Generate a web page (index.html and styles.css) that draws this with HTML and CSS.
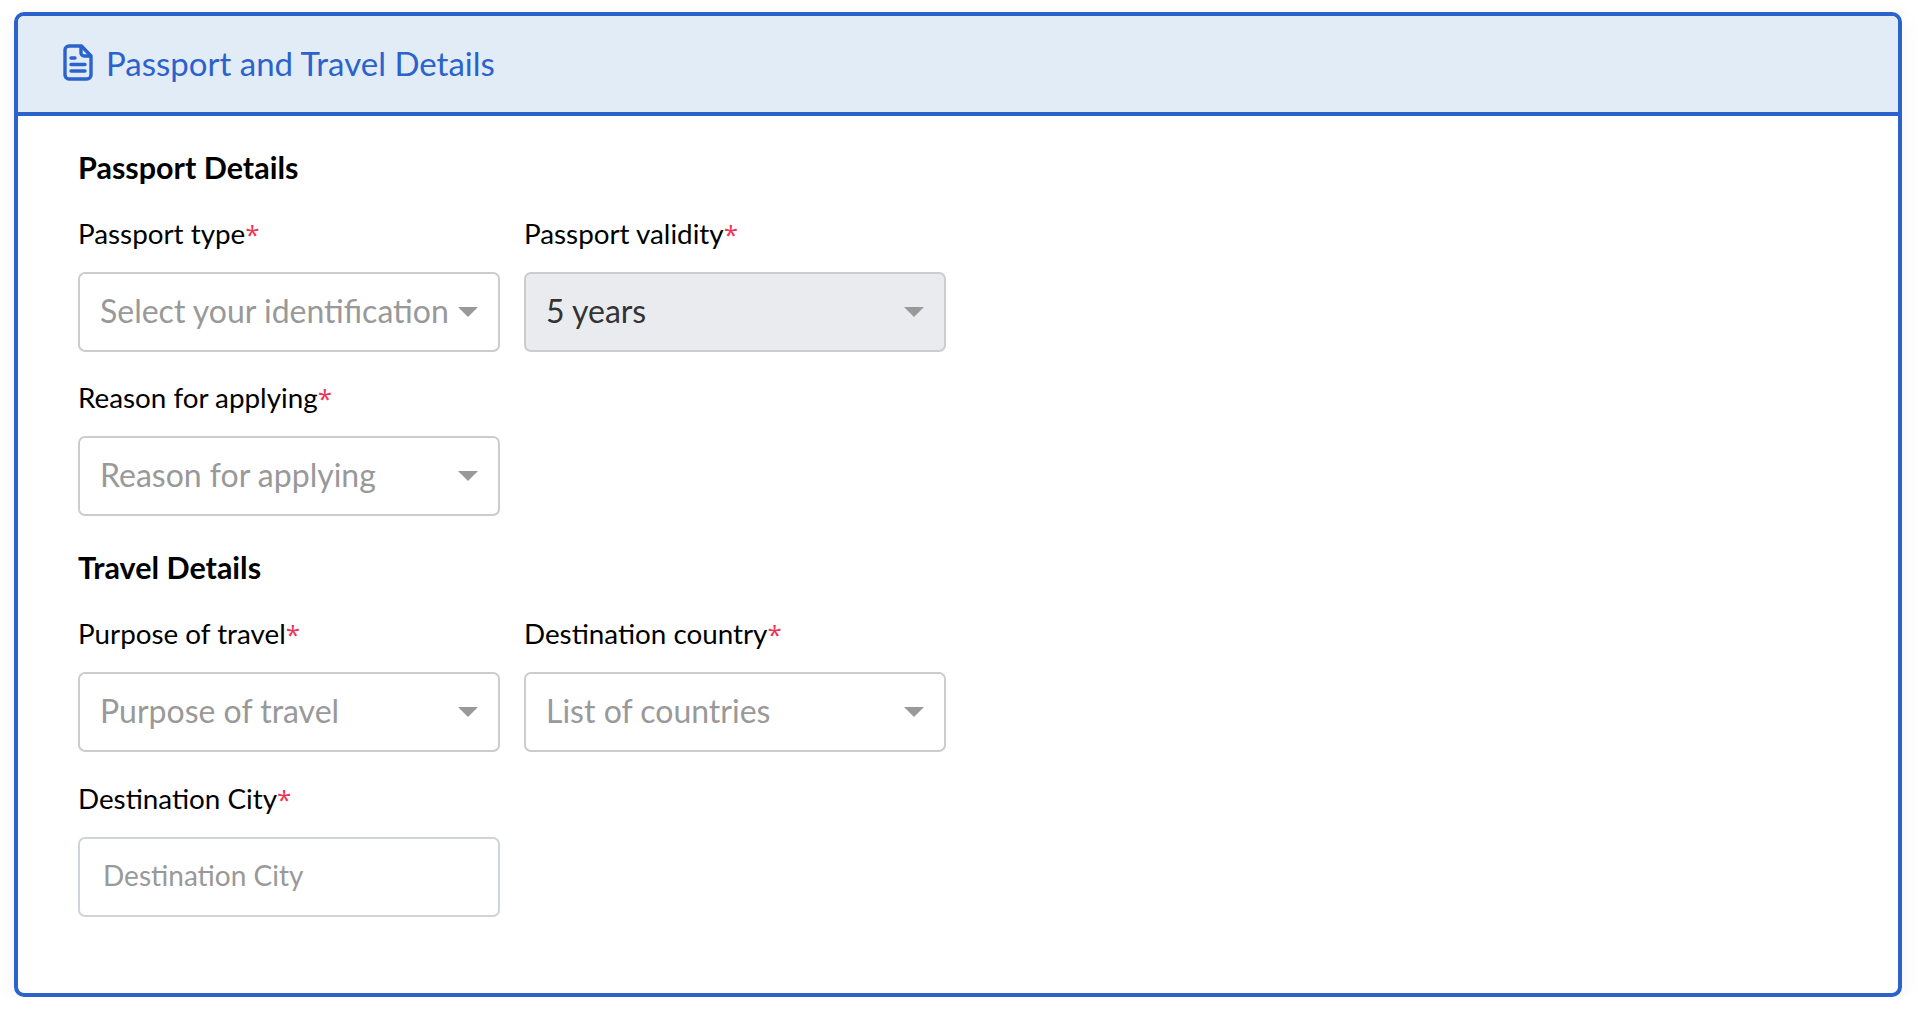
FILE: index.html
```html
<!DOCTYPE html>
<html lang="en">
<head>
  <meta charset="UTF-8">
  <meta name="viewport" content="width=device-width, initial-scale=1.0">
  <title>Passport and Travel Details</title>
  <link rel="stylesheet" href="styles.css">
</head>
<body>

  <div class="card">
    <div class="card-header">
      <svg class="card-icon" viewBox="0 0 30 37" fill="none" stroke="currentColor" stroke-width="3.4" stroke-linecap="round" stroke-linejoin="round">
        <path d="M6 2h12.5L28 12v19a4 4 0 0 1-4 4H6a4 4 0 0 1-4-4V6a4 4 0 0 1 4-4z"/>
        <path d="M18 2.5V9a3 3 0 0 0 3 3h6.5"/>
        <path d="M8 14h4M8 20.5h14M8 27h14"/>
      </svg>
      <h1 class="card-title">Passport and Travel Details</h1>
    </div>

    <form class="card-body">
      <h2 class="section-title">Passport Details</h2>
      <div class="field-grid passport-grid">
        <div class="field">
          <label class="field-label">Passport type<span class="required">*</span></label>
          <div class="select-box">
            <select class="control is-placeholder"><option>Select your identification</option></select>
          </div>
        </div>
        <div class="field">
          <label class="field-label">Passport validity<span class="required">*</span></label>
          <div class="select-box">
            <select class="control is-filled"><option>5 years</option></select>
          </div>
        </div>
        <div class="field">
          <label class="field-label">Reason for applying<span class="required">*</span></label>
          <div class="select-box">
            <select class="control is-placeholder"><option>Reason for applying</option></select>
          </div>
        </div>
      </div>

      <h2 class="section-title">Travel Details</h2>
      <div class="field-grid">
        <div class="field">
          <label class="field-label">Purpose of travel<span class="required">*</span></label>
          <div class="select-box">
            <select class="control is-placeholder"><option>Purpose of travel</option></select>
          </div>
        </div>
        <div class="field">
          <label class="field-label">Destination country<span class="required">*</span></label>
          <div class="select-box">
            <select class="control is-placeholder"><option>List of countries</option></select>
          </div>
        </div>
        <div class="field">
          <label class="field-label">Destination City<span class="required">*</span></label>
          <input class="control text-input" type="text" placeholder="Destination City">
        </div>
      </div>
    </form>
  </div>

</body>
</html>
```

FILE: styles.css
```css
body {
  margin: 0;
  background-color: #ffffff;
  font-family: "Lato", "Open Sans", sans-serif;
  color: #000000;
}
.card {
  margin: 12px 16px 0 14px;
  height: 985px;
  box-sizing: border-box;
  border: 4px solid #2b62cc;
  border-radius: 10px;
  background-color: #ffffff;
  box-shadow: 0 6px 24px rgba(0, 0, 0, 0.05);
  overflow: hidden;
}
.card-header {
  display: flex;
  align-items: center;
  gap: 13px;
  height: 93px;
  padding-bottom: 3px;
  padding-left: 45px;
  background-color: #e2ecf7;
  border-bottom: 4px solid #2b62cc;
  color: #2b62cc;
}
.card-icon {
  width: 30px;
  height: 37px;
}
.card-title {
  margin: 0;
  font-size: 33px;
  font-weight: 400;
}
.card-body {
  padding: 33px 60px 0;
}
.section-title {
  margin: 0 0 31px;
  font-size: 30.5px;
  line-height: 36px;
  font-weight: 700;
}
.field-grid {
  display: grid;
  grid-template-columns: 422px 422px;
  column-gap: 24px;
  row-gap: 29px;
  margin-bottom: 33px;
}
.passport-grid {
  row-gap: 28px;
}
.field-label {
  display: block;
  margin-bottom: 20px;
  font-size: 27.8px;
  line-height: 36px;
}
.required {
  font-family: "Open Sans", sans-serif;
  font-size: 26px;
  color: #ee3355;
}
.select-box {
  position: relative;
}
.select-box::after {
  content: "";
  position: absolute;
  top: 35px;
  right: 22px;
  border-left: 10px solid transparent;
  border-right: 10px solid transparent;
  border-top: 10px solid #999999;
}
.control {
  display: block;
  width: 100%;
  height: 80px;
  box-sizing: border-box;
  border: 2px solid #cccccc;
  border-radius: 7px;
  background-color: #ffffff;
  font-family: inherit;
  font-size: 32px;
  outline: none;
  appearance: none;
}
select.control {
  padding: 0 20px 4px;
}
.is-placeholder {
  color: #999999;
}
.is-filled {
  background-color: #e9ebef;
  color: #333333;
}
.text-input {
  padding: 0 23px 4px;
  border-color: #ced4da;
  font-size: 28px;
}
.text-input::placeholder {
  color: #999999;
  opacity: 1;
}
```
